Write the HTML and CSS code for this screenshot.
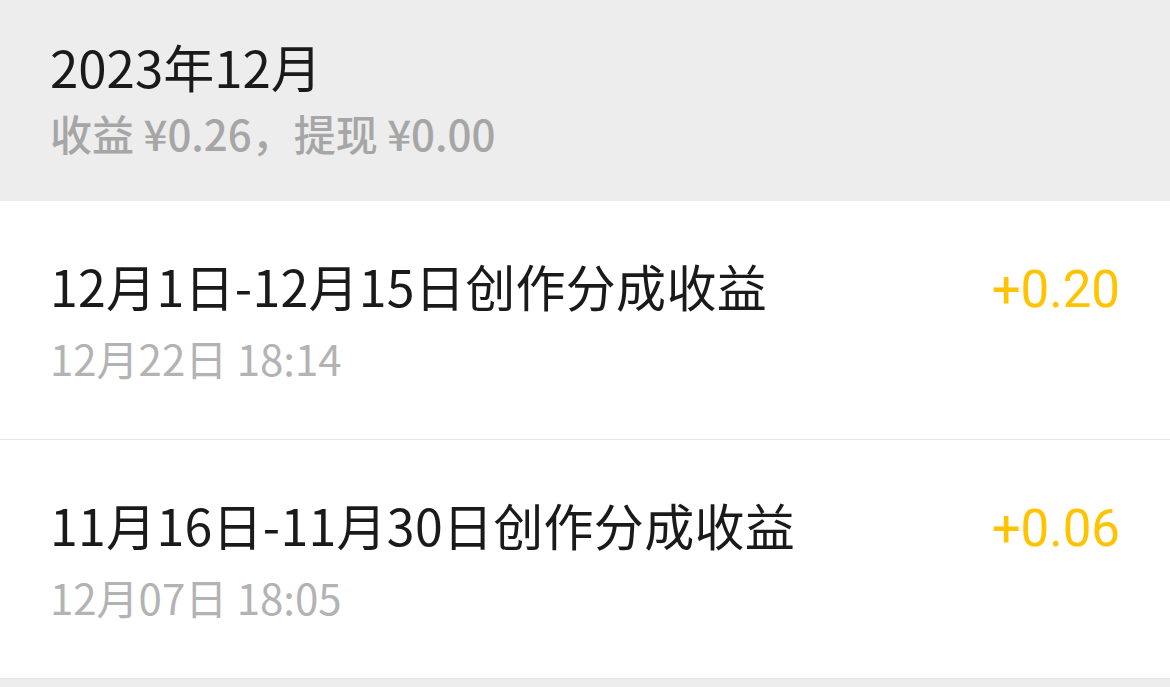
FILE: index.html
```html
<!DOCTYPE html>
<html lang="zh-CN">
<head>
<meta charset="utf-8">
<link rel="stylesheet" href="styles.css">
</head>
<body>
<div class="page">
  <header class="month">
    <div class="month-title">2023年12月</div>
    <div class="month-sum">收益 ¥0.26，提现 ¥0.00</div>
  </header>
  <ul class="list">
    <li class="item">
      <div class="item-main">
        <div class="item-title">12月1日-12月15日创作分成收益</div>
        <div class="item-time">12月22日 18:14</div>
      </div>
      <div class="item-amount">+0.20</div>
    </li>
    <li class="item">
      <div class="item-main">
        <div class="item-title">11月16日-11月30日创作分成收益</div>
        <div class="item-time">12月07日 18:05</div>
      </div>
      <div class="item-amount">+0.06</div>
    </li>
  </ul>
</div>
</body>
</html>
```
FILE: styles.css
```css
html, body {
  margin: 0;
  padding: 0;
  background: #ededed;
}
body {
  font-family: "Noto Sans CJK SC", "Noto Sans", sans-serif;
  width: 1170px;
  height: 687px;
  overflow: hidden;
}
.month {
  height: 201px;
  box-sizing: border-box;
  padding: 36px 48px 0 50px;
  background: #ededed;
}
.month-title {
  font-size: 51px;
  line-height: 60px;
  color: #1a1a1a;
}
.month-sum {
  margin-top: 7px;
  font-size: 42px;
  line-height: 60px;
  font-weight: 500;
  color: #a6a6a6;
}
.list {
  list-style: none;
  margin: 0;
  padding: 0;
  background: #fff;
}
.item {
  display: flex;
  justify-content: space-between;
  align-items: baseline;
  height: 239px;
  box-sizing: border-box;
  padding: 49px 50px 0 50px;
  border-bottom: 1px solid #e5e5e5;
}
.item-title {
  font-size: 50px;
  line-height: 70px;
  letter-spacing: 0.3px;
  color: #1a1a1a;
}
.item-time {
  margin-top: 3px;
  font-size: 42px;
  line-height: 70px;
  color: #b3b3b3;
}
.item-amount {
  font-family: Roboto, "Noto Sans", sans-serif;
  font-size: 51px;
  line-height: 70px;
  font-weight: 400;
  color: #ffc300;
}
```
